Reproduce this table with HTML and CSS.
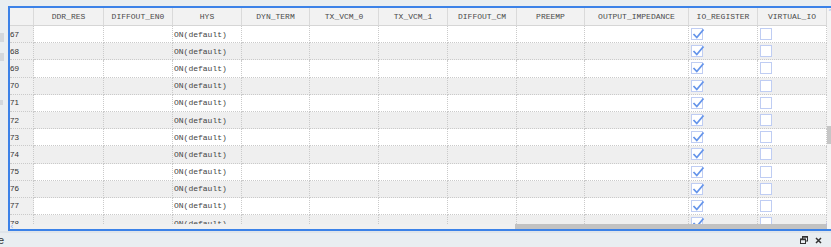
FILE: index.html
```html
<!DOCTYPE html>
<html>
<head>
<meta charset="utf-8">
<link rel="stylesheet" href="styles.css">
</head>
<body>
<div class="top"></div>
<div class="side">
  <span class="nub n1"></span><span class="nub n2"></span><span class="nub n3"></span>
</div>
<div class="frame">
  <div class="main">
    <div class="grid">
      <div class="row head">
        <div class="c"></div>
        <div class="c">DDR_RES</div>
        <div class="c">DIFFOUT_EN0</div>
        <div class="c">HYS</div>
        <div class="c">DYN_TERM</div>
        <div class="c">TX_VCM_0</div>
        <div class="c">TX_VCM_1</div>
        <div class="c">DIFFOUT_CM</div>
        <div class="c">PREEMP</div>
        <div class="c">OUTPUT_IMPEDANCE</div>
        <div class="c">IO_REGISTER</div>
        <div class="c">VIRTUAL_IO</div>
      </div>
      <div id="rows"></div>
    </div>
    <div class="hscroll">
      <span class="arr left">‹</span>
      <div class="track"><div class="thumb"></div></div>
      <span class="arr right">›</span>
    </div>
  </div>
  <div class="vscroll">
    <span class="up">˄</span>
    <div class="vthumb"></div>
  </div>
</div>
<div class="panel">
  <span class="ptitle">e</span>
  <div class="picons">
    <svg width="8" height="8" viewBox="0 0 8 8"><rect x="2.5" y="0.5" width="5" height="4.5" fill="none" stroke="#333" stroke-width="1"/><rect x="0.5" y="3" width="5" height="4.5" fill="#e9eef1" stroke="#333" stroke-width="1"/><line x1="0.5" y1="3.5" x2="5.5" y2="3.5" stroke="#333" stroke-width="1.5"/><line x1="2.5" y1="1" x2="7.5" y2="1" stroke="#333" stroke-width="1.5"/></svg>
    <svg width="7" height="7" viewBox="0 0 7 7"><path d="M1 1 L6 6 M6 1 L1 6" stroke="#333" stroke-width="1.5"/></svg>
  </div>
</div>
<script src="app.js"></script>
</body>
</html>
```

FILE: styles.css
```css
* { box-sizing: border-box; }
html, body { margin: 0; padding: 0; }
body {
  width: 831px;
  height: 247px;
  overflow: hidden;
  background: #e9eef1;
  font-family: "Liberation Mono", monospace;
  position: relative;
}
.top { height: 6px; }
.side { position: absolute; left: 0; top: 0; width: 8px; height: 231px; }
.nub { position: absolute; left: 0; width: 4px; background: #d4d8dc; }
.nub.n1 { top: 33px; height: 9px; }
.nub.n2 { top: 53px; height: 8px; }
.nub.n3 { top: 100px; height: 5px; width: 3px; }
.frame {
  margin-left: 8px;
  width: 840px;
  height: 225px;
  border: 2px solid #3b82e8;
  border-right: none;
  display: flex;
  background: #fff;
}
.main { width: 817px; display: flex; flex-direction: column; }
.grid { height: 216px; overflow: hidden; }
.row {
  display: grid;
  grid-template-columns: 24px 70px 69px 69px 68px 69px 69px 69px 68px 104px 69px 69px;
  height: 17.2px;
}
.row .c {
  border-right: 1px dotted #cacaca;
  border-bottom: 1px dotted #cacaca;
  font-size: 8px;
  color: #444;
  display: flex;
  align-items: center;
  padding-left: 1px;
  white-space: nowrap;
  overflow: hidden;
}
.row.even .c { background: #efefef; }
.row.odd .c { background: #ffffff; }
.row .c.num {
  background: #f0f0f0;
  font-family: "Liberation Sans", sans-serif;
  font-size: 8px;
  padding-left: 0;
  color: #333;
}
.row.head { height: 18px; }
.row.head .c {
  background: #f2f2f2;
  border-right: 1px solid #dadada;
  border-bottom: 1px solid #d6d6d6;
  justify-content: center;
  color: #4a4a4a;
  padding-left: 0;
}
.cb {
  width: 12px;
  height: 12px;
  border: 1px solid #bfcdf3;
  background: #fff;
  margin-left: 1px;
  position: relative;
}
.cb svg { position: absolute; left: 0; top: -1px; }
.hscroll {
  height: 5px;
  display: flex;
  background: #f0f0f0;
  position: relative;
}
.arr {
  position: absolute;
  font-family: "DejaVu Sans", sans-serif;
  font-size: 9px;
  line-height: 5px;
  color: #8fb3ef;
  top: 0;
}
.arr.left { left: 0; }
.arr.right { right: -2px; top: -3px; }
.track { flex: 1; display: flex; justify-content: flex-end; }
.thumb { width: 312px; height: 5px; background: #c2c2c2; }
.vscroll { width: 17px; background: #f5f5f5; position: relative; }
.up {
  position: absolute; left: 1px; top: 1px;
  font-size: 8px; color: #9ab6ea; font-family: "DejaVu Sans", sans-serif;
}
.vthumb {
  position: absolute; left: 0; top: 118px;
  width: 10px; height: 18px; background: #c6c6c6;
}
.panel {
  height: 16px;
  border-top: 2px solid #dfe5ea;
  display: flex;
  align-items: center;
  justify-content: space-between;
}
.ptitle {
  font-family: "Liberation Sans", sans-serif;
  font-size: 11px;
  color: #333;
  margin-left: -2px;
}
.picons { display: flex; align-items: center; gap: 7px; margin-right: 9px; }
```

FILE: app.js
```js
var rows = document.getElementById('rows');
var check = '<div class="cb"><svg width="13" height="13" viewBox="0 0 13 13"><path d="M1.5 6 L4.8 9.5 L11.5 1.5" fill="none" stroke="#6494ea" stroke-width="1.8"/></svg></div>';
var empty = '<div class="cb"></div>';
var html = '';
for (var n = 67; n <= 78; n++) {
  var cls = (n % 2 === 0) ? 'even' : 'odd';
  html += '<div class="row ' + cls + '">' +
    '<div class="c num">' + n + '</div>' +
    '<div class="c"></div><div class="c"></div>' +
    '<div class="c">ON(default)</div>' +
    '<div class="c"></div><div class="c"></div><div class="c"></div><div class="c"></div><div class="c"></div><div class="c"></div>' +
    '<div class="c">' + check + '</div>' +
    '<div class="c">' + empty + '</div>' +
    '</div>';
}
rows.innerHTML = html;
```
